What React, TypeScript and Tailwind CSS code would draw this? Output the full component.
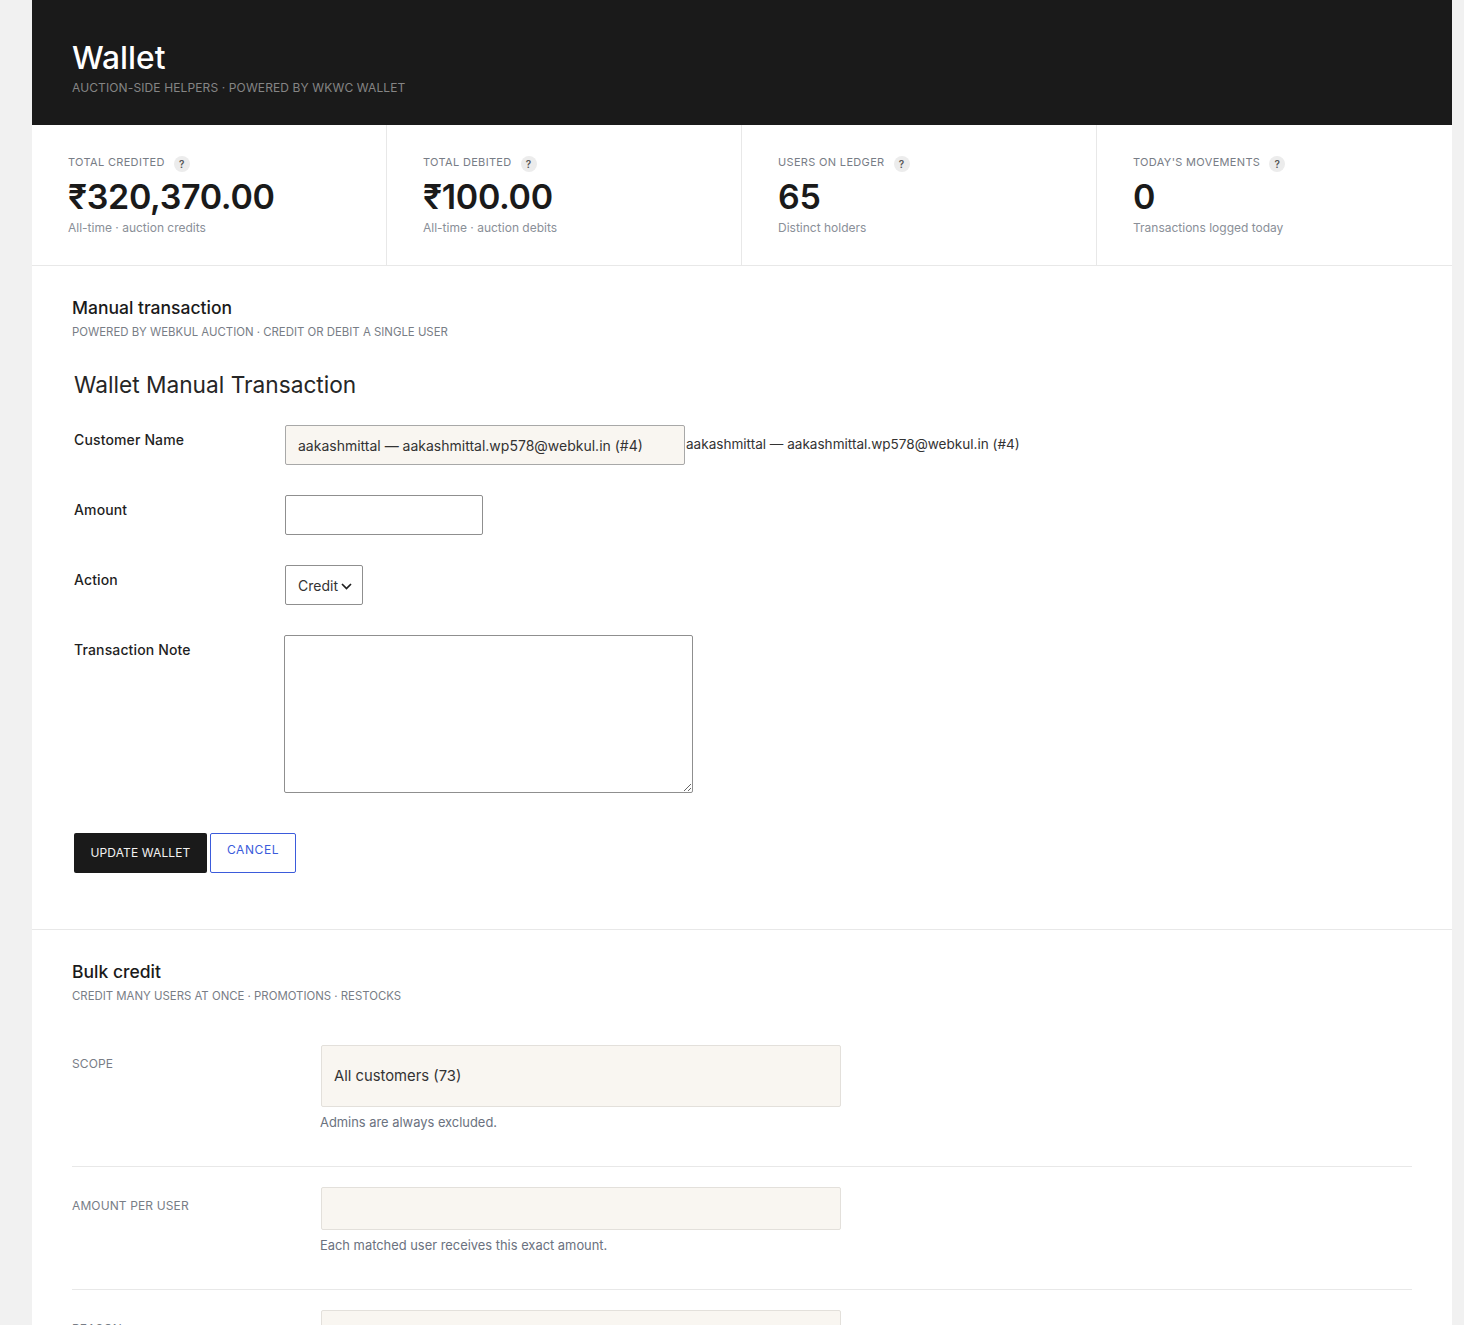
const font = { fontFamily: 'Inter, "Noto Sans", sans-serif' };

const stats = [
  { label: 'TOTAL CREDITED', value: '₹320,370.00', sub: 'All-time · auction credits' },
  { label: 'TOTAL DEBITED', value: '₹100.00', sub: 'All-time · auction debits' },
  { label: 'USERS ON LEDGER', value: '65', sub: 'Distinct holders' },
  { label: "TODAY'S MOVEMENTS", value: '0', sub: 'Transactions logged today' },
];

const customer = 'aakashmittal — aakashmittal.wp578@webkul.in (#4)';

function StatCard({ label, value, sub, last }: { label: string; value: string; sub: string; last: boolean }) {
  return (
    <div className={`h-[140px] w-[355px] pl-9 pt-[31px] ${last ? '' : 'border-r border-[#e8e8e8]'}`}>
      <div className="flex h-[16px] items-start text-[11px] leading-[12px] tracking-[0.03em] text-[#787d86]">
        {label}
        <span className="ml-[9px] flex h-4 w-4 items-center justify-center rounded-full bg-[#ececec] text-[10px] font-semibold leading-none tracking-normal text-[#555]">?</span>
      </div>
      <div className="mt-[4px] h-[42px] text-[34px] font-semibold leading-[42px] tracking-[-0.01em] text-[#1a1a1a]">{value}</div>
      <div className="mt-[2px] text-[12px] leading-4 text-[#8a8f98]">{sub}</div>
    </div>
  );
}

function FormRow({ label, className, children }: { label: string; className: string; children: React.ReactNode }) {
  return (
    <div className={`flex items-start ${className}`}>
      <label className="w-[211px] shrink-0 pt-[6px] text-[14px] font-medium leading-[18px] tracking-[0.01em] text-[#1f1f1f]">{label}</label>
      {children}
    </div>
  );
}

function BulkRow({ label, hint, inputHeight, value }: { label: string; hint: string; inputHeight: string; value?: string }) {
  return (
    <div className="flex items-start">
      <div className="w-[249px] shrink-0 pt-[11px] text-[12px] leading-4 tracking-[0.01em] text-[#787d86]">{label}</div>
      <div>
        <div className={`flex w-[520px] items-center rounded-[2px] border border-[#e3e0db] bg-[#f9f6f1] pl-3 text-[14.8px] text-[#333] ${inputHeight}`}>{value}</div>
        <p className="-ml-px mt-[8px] text-[12.9px] leading-[16px] text-[#6b7280]">{hint}</p>
      </div>
    </div>
  );
}

export default function App() {
  return (
    <div className="flex h-[1325px] overflow-hidden bg-[#f1f1f1] pl-8" style={font}>
      <main className="w-[1420px] shrink-0 bg-white">
        <header className="h-[125px] bg-[#1a1a1a] px-10 pt-[39px]">
          <h1 className="text-[31.7px] font-medium leading-[38px] text-white">Wallet</h1>
          <p className="mt-[3px] text-[12px] leading-4 tracking-[0.01em] text-[#858585]">AUCTION-SIDE HELPERS · POWERED BY WKWC WALLET</p>
        </header>

        <section className="flex border-b border-[#e8e8e8]">
          {stats.map((s, i) => (
            <StatCard key={s.label} {...s} last={i === 3} />
          ))}
        </section>

        <section className="h-[664px] border-b border-[#e8e8e8] px-10 pt-[31px]">
          <h2 className="text-[17.5px] font-medium leading-[22px] text-[#1a1a1a]">Manual transaction</h2>
          <p className="mt-[5px] text-[11.4px] leading-4 text-[#787d86]">POWERED BY WEBKUL AUCTION · CREDIT OR DEBIT A SINGLE USER</p>

          <div className="pl-[2px]">
            <h3 className="mt-[29px] text-[22.7px] font-normal leading-[32px] text-[#262626]">Wallet Manual Transaction</h3>

            <FormRow label="Customer Name" className="mt-[24px] h-[40px]">
              <div className="flex h-10 w-[400px] items-center rounded-[2px] border border-[#a8a8a8] bg-[#f9f6f1] pl-3 pt-px text-[14px] text-[#333]">{customer}</div>
              <span className="ml-px pt-[9px] text-[13.55px] leading-[20px] text-[#333]">{customer}</span>
            </FormRow>

            <FormRow label="Amount" className="mt-[30px]">
              <input className="h-10 w-[198px] rounded-[2px] border border-[#8f8f8f] bg-white" />
            </FormRow>

            <FormRow label="Action" className="mt-[30px]">
              <div className="flex h-10 w-[78px] items-center rounded-[2px] border border-[#8f8f8f] pl-3 text-[14px] text-[#333]">
                Credit
                <svg className="ml-[3px] mt-[3px]" width="11" height="7" viewBox="0 0 11 7" fill="none" stroke="#1f1f1f" strokeWidth="1.7">
                  <path d="M1 1l4.5 4.5L10 1" />
                </svg>
              </div>
            </FormRow>

            <div className="mt-[30px] flex items-start">
              <label className="w-[210px] shrink-0 pt-[6px] text-[14px] font-medium leading-[18px] tracking-[0.01em] text-[#1f1f1f]">Transaction Note</label>
              <textarea className="h-[158px] w-[409px] rounded-[2px] border border-[#8f8f8f] bg-white" />
            </div>

            <div className="mt-[40px] flex gap-[3px]">
              <button className="h-10 w-[133px] rounded-[2px] bg-[#1a1a1a] text-[12px] tracking-[0.01em] text-[#f2f2f2]">UPDATE WALLET</button>
              <button className="h-10 w-[86px] rounded-[2px] border border-[#3b5bdb] pb-[7px] text-[12px] tracking-[0.05em] text-[#3b5bdb]">CANCEL</button>
            </div>
          </div>
        </section>

        <section className="px-10 pt-[31px]">
          <h2 className="text-[17.5px] font-medium leading-[22px] text-[#1a1a1a]">Bulk credit</h2>
          <p className="mt-[5px] text-[11.4px] leading-4 text-[#787d86]">CREDIT MANY USERS AT ONCE · PROMOTIONS · RESTOCKS</p>

          <div className="mt-[41px] border-b border-[#e8e8e8] pb-[35px]">
            <BulkRow label="SCOPE" hint="Admins are always excluded." inputHeight="h-[62px]" value="All customers (73)" />
          </div>
          <div className="border-b border-[#e8e8e8] pb-[35px] pt-[20px]">
            <BulkRow label="AMOUNT PER USER" hint="Each matched user receives this exact amount." inputHeight="h-[43px]" />
          </div>
          <div className="pt-[20px]">
            <BulkRow label="REASON" hint="" inputHeight="h-[43px]" />
          </div>
        </section>
      </main>
    </div>
  );
}
